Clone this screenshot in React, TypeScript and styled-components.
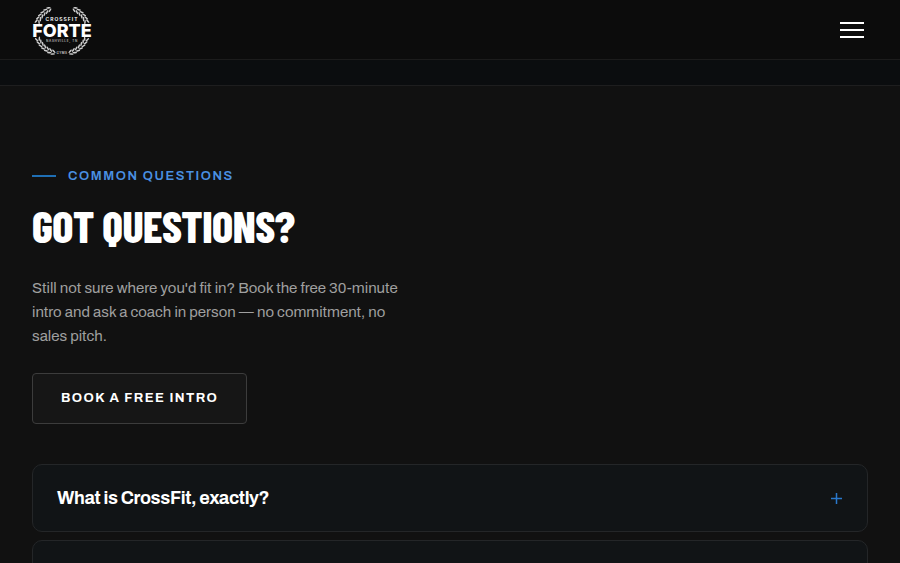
import React from "react";
import styled, { createGlobalStyle } from "styled-components";

const GlobalStyle = createGlobalStyle`
  *, *::before, *::after { box-sizing: border-box; }
  body {
    margin: 0;
    background: #111111;
    color: #ffffff;
    font-family: Archivo, "Liberation Sans", Arial, sans-serif;
    overflow-x: hidden;
  }
`;

const Header = styled.header`
  display: flex;
  align-items: center;
  justify-content: space-between;
  height: 60px;
  padding: 0 32px;
  background: #0c0c0c;
  border-bottom: 1px solid #1c1c1c;
`;

const LogoLink = styled.a`
  display: flex;
  color: #ffffff;
`;

const MenuButton = styled.button`
  display: flex;
  flex-direction: column;
  gap: 5px;
  padding: 4px;
  border: 0;
  background: none;
  cursor: pointer;
`;

const MenuBar = styled.span`
  width: 24px;
  height: 2px;
  background: #ffffff;
`;

const Band = styled.div`
  height: 26px;
  background: #0b0d0f;
  border-bottom: 1px solid #1e1e1f;
`;

const Section = styled.section`
  padding: 80px 32px;
`;

const Intro = styled.div`
  display: flex;
  flex-direction: column;
  align-items: flex-start;
  max-width: 380px;
  margin-bottom: 40px;
`;

const Eyebrow = styled.p`
  display: flex;
  align-items: center;
  gap: 12px;
  margin: 0 0 14px;
  color: #4a90e2;
  font-size: 13px;
  font-weight: 600;
  line-height: 20px;
  letter-spacing: 0.12em;
  text-transform: uppercase;

  &::before {
    content: "";
    width: 24px;
    height: 2px;
    background: #1f6fb5;
  }
`;

const Title = styled.h2`
  margin: 0 0 24px;
  font-family: "Barlow Condensed", "Roboto Condensed", "Liberation Sans Narrow", sans-serif;
  font-size: 44px;
  font-weight: 800;
  line-height: 52px;
  letter-spacing: -0.01em;
  white-space: nowrap;
  text-transform: uppercase;
`;

const Lead = styled.p`
  margin: 0 0 25px;
  color: #a0a0a0;
  font-size: 15px;
  line-height: 24px;
`;

const BookLink = styled.a`
  padding: 14px 28px;
  border: 1px solid #3c3c3c;
  border-radius: 4px;
  background: #161616;
  color: #ffffff;
  font-size: 13px;
  font-weight: 700;
  line-height: 21px;
  letter-spacing: 0.11em;
  text-decoration: none;
  text-transform: uppercase;
`;

const FaqList = styled.div`
  display: flex;
  flex-direction: column;
  gap: 8px;
`;

const FaqItem = styled.button`
  display: flex;
  align-items: center;
  justify-content: space-between;
  padding: 20px 24px;
  border: 1px solid #242628;
  border-radius: 10px;
  background: #111416;
  color: #ffffff;
  font: inherit;
  font-size: 18px;
  font-weight: 700;
  line-height: 26px;
  letter-spacing: -0.02em;
  text-align: left;
  cursor: pointer;
`;

const leaves = [121, 129, 137, 145, 153, 161, 201, 209, 217, 225, 233, 241, 249];

function Branch() {
  return (
    <g>
      {leaves.map((deg) => {
        const a = (deg * Math.PI) / 180;
        const x = 30 + 26 * Math.cos(a);
        const y = 25 - 24 * Math.sin(a);
        const turn = deg < 180 ? 90 - deg : 270 - deg;
        return (
          <g key={deg} transform={`translate(${x} ${y}) rotate(${turn})`}>
            <ellipse cx="0" cy="-1.6" rx="2.3" ry="0.8" transform="rotate(25)" />
            <ellipse cx="0" cy="1.6" rx="2.3" ry="0.8" transform="rotate(-25)" />
          </g>
        );
      })}
    </g>
  );
}

function Logo() {
  return (
    <svg width="60" height="49" viewBox="0 0 60 49" fill="currentColor" overflow="visible" aria-hidden="true">
      <g opacity="0.8">
        <Branch />
        <g transform="translate(60 0) scale(-1 1)">
          <Branch />
        </g>
      </g>
      <g textAnchor="middle" fontFamily="Inter, sans-serif">
        <text x="30" y="16" fontSize="5" fontWeight="600" letterSpacing="1">CROSSFIT</text>
        <text x="30" y="32" fontSize="18" fontWeight="800">FORTE</text>
        <text x="30" y="37" fontSize="3" fontWeight="600" letterSpacing="0.7" opacity="0.7">NASHVILLE, TN</text>
        <text x="30" y="49" fontSize="3" fontWeight="600" letterSpacing="0.5" opacity="0.8">GYMS</text>
      </g>
    </svg>
  );
}

const PlusIcon = styled.svg`
  width: 12px;
  height: 12px;
  stroke: #2a78cc;
  stroke-width: 1.5;
`;

const questions = ["What is CrossFit, exactly?", "Do I need to be in shape to start?"];

export default function App() {
  return (
    <>
      <GlobalStyle />
      <Header>
        <LogoLink href="#" aria-label="CrossFit Forte home">
          <Logo />
        </LogoLink>
        <MenuButton type="button" aria-label="Open menu">
          <MenuBar />
          <MenuBar />
          <MenuBar />
        </MenuButton>
      </Header>
      <Band />
      <Section>
        <Intro>
          <Eyebrow>Common Questions</Eyebrow>
          <Title>Got Questions?</Title>
          <Lead>
            Still not sure where you'd fit in? Book the free 30-minute intro and ask a coach in
            person — no commitment, no sales pitch.
          </Lead>
          <BookLink href="#intro">Book a Free Intro</BookLink>
        </Intro>
        <FaqList>
          {questions.map((question) => (
            <FaqItem key={question} type="button" aria-expanded="false">
              <span>{question}</span>
              <PlusIcon viewBox="0 0 12 12" aria-hidden="true">
                <path d="M5.5 1V12M0 6.5H11" />
              </PlusIcon>
            </FaqItem>
          ))}
        </FaqList>
      </Section>
    </>
  );
}
